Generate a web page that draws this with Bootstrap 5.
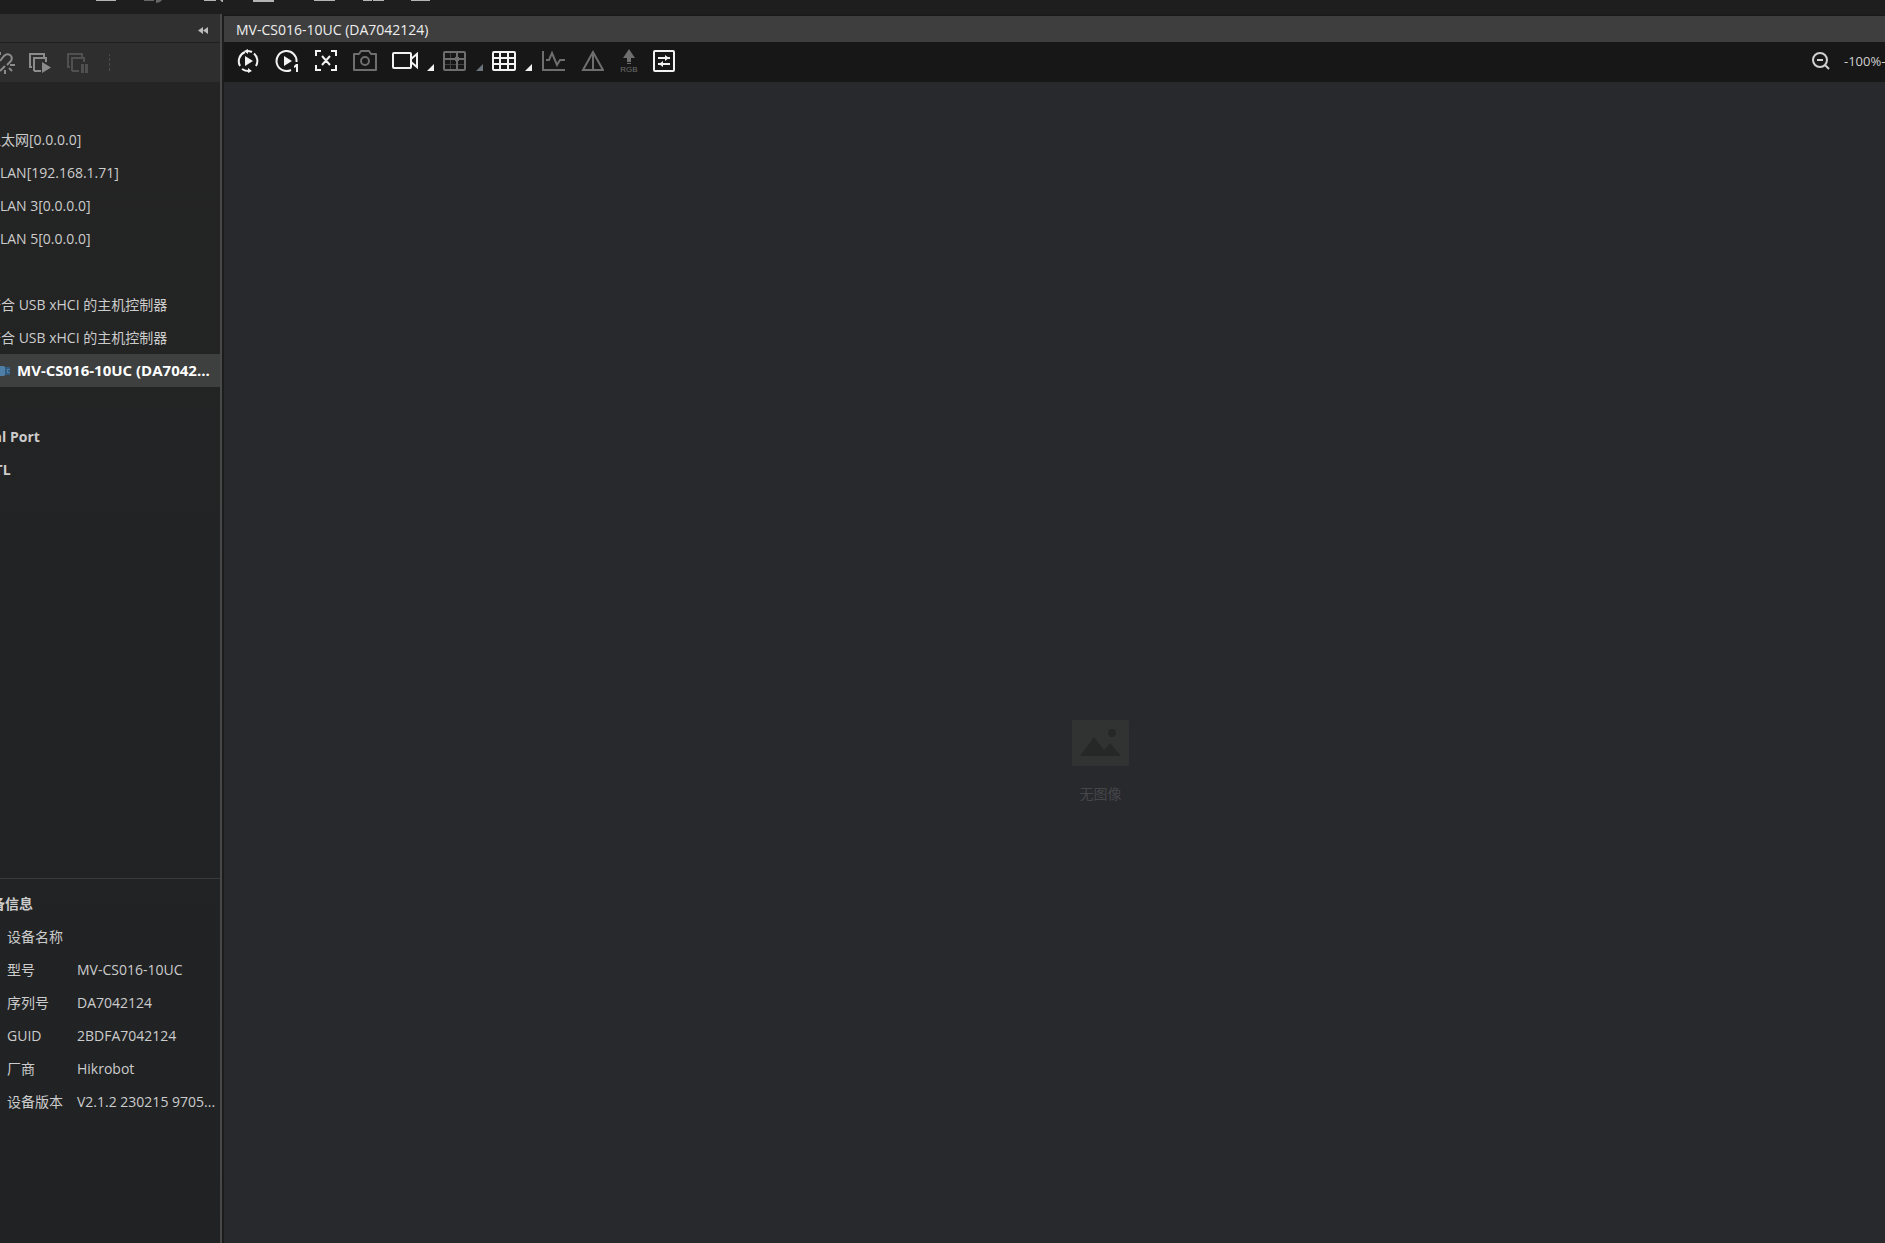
<!DOCTYPE html>
<html lang="zh-CN">
<head>
<meta charset="utf-8">
<meta name="viewport" content="width=device-width, initial-scale=1">
<title>MVS</title>
<link href="https://cdn.jsdelivr.net/npm/bootstrap@5.3.0/dist/css/bootstrap.min.css" rel="stylesheet">
<style>
body{background:#1e1e1e;color:#ccc;font-family:"Open Sans","Noto Sans CJK SC",sans-serif;font-size:14px;line-height:33px}
svg{display:block;fill:none;stroke:currentColor;stroke-width:2}
.solid{fill:currentColor;stroke:none}
.menu-strip{height:14px;color:#b4b4b4}
.menu-strip .off{color:#666}
.side{width:220px;background:linear-gradient(#242424,#202224)}
.side-head{height:28px;background:#303030;color:#bbb}
.side-tools{height:40px;background:#2e2e2e;border-top:1px solid #1f1f1f;color:#8b8b8b}
.side-start{margin-left:12px}
.side-stop{margin-left:14px}
.side-sep{margin-left:16px;color:#4c4c4c}
.splitter{width:4px;background:#1c1c1d;border-left:2px solid #484848}
.tool{border:0;background:none;padding:0;color:inherit;flex:none}
.tool:disabled{color:#6e6e6e}
.side-tools .tool:disabled{color:#505050}
.tree,.info-title{margin-left:-33px}
.tree li{height:33px;padding-left:20px;white-space:nowrap}
.tree .group{padding-left:0;font-weight:700}
.tree .picked{background:#3e403f;color:#fff;font-weight:700;font-size:15px;padding-left:33px}
.usb-body{fill:#4f7ea6;stroke:none}
.usb-plug{fill:#315b7f;stroke:none}
.info{border-top:1px solid #393a3b;padding-top:8px;height:365px}
.info-title{font-weight:700;padding-left:10px}
.info table{table-layout:fixed}
.info th{width:77px;font-weight:400;padding:0 0 0 7px}
.info td{padding:0;white-space:nowrap}
.doc-tab{height:27px;background:#3e3e3e;border-top:1px solid #191919;color:#eee;line-height:28px;margin-top:1px}
.view-tools{height:40px;background:#171717;color:#f2f2f2;padding:0 0 2px 12px}
.tools-wide{gap:15px}
.tools-tight{gap:9px}
.tools-end{gap:12px}
.drop{align-self:flex-end;margin-bottom:2px}
.rgb{font:8px "Liberation Sans",sans-serif;fill:#6e6e6e;stroke:none}
.zoom-box{gap:14px;width:74px;font-size:13px;color:#d0d0d0;white-space:nowrap}
.view{background:#28292d;color:#45464a;padding:205px 0 0 92px;gap:11px}
.pic-frame{fill:#313333;stroke:none}
.pic-shape{fill:#262827;stroke:none}
</style>
<script src="https://cdn.jsdelivr.net/npm/bootstrap@5.3.0/dist/js/bootstrap.bundle.min.js"></script>
</head>
<body class="vh-100 d-flex flex-column overflow-hidden">
<header class="menu-strip flex-shrink-0">
<svg width="440" height="4"><path class="solid" d="M96 0h20v1H96zM204 0h12v1h-12zM220 0h3v2h-1zM253 0h21v2h-21zM314 0h21v1h-21zM363 0h9v1h-9zM373 0h11v1h-11zM411 0h19v1h-19z"/><path class="solid off" d="M144 0h10v1h-10zM156 0h6l-2 2-4 1z"/></svg>
</header>
<div class="d-flex flex-grow-1 overflow-hidden">
<aside class="side d-flex flex-column flex-shrink-0 overflow-hidden">
<div class="side-head d-flex align-items-center justify-content-end pe-2 pt-1 flex-shrink-0">
<button class="tool me-1" aria-label="Collapse"><svg width="10" height="7"><path class="solid" d="M5 0v7L0 3.500zM10 0v7L5 3.500z"/></svg></button>
</div>
<div class="side-tools d-flex align-items-center flex-shrink-0">
<button class="tool" aria-label="Disconnect"><svg width="16" height="24"><path d="M0 10l4-5q3-3 6-1t1 6l-4 4M0 20l5-5M10 14h5M9 17l3 3M5 19v4M0 1v3"/></svg></button>
<button class="tool side-start" aria-label="Start all"><svg width="24" height="22"><path d="M4 15H2V2h14v3M7 18H6V6h12v4M6 19h7"/><path class="solid" d="M14 10l9 5.500-9 5.500z"/></svg></button>
<button class="tool side-stop" disabled aria-label="Stop all"><svg width="24" height="22"><path d="M4 15H2V2h14v3M7 18H6V6h12v4M6 19h7"/><path class="solid" d="M15 12h3v9h-3zM19 12h3v9h-3z"/></svg></button>
<svg class="side-sep" width="8" height="18"><path class="solid" d="M3 0h1v2H3zM3 4h1v3H3zM3 9h1v3H3zM3 14h1v3H3z"/></svg>
</div>
<ul class="tree list-unstyled mb-0 pt-2 flex-grow-1">
<li class="group"></li>
<li>以太网[0.0.0.0]</li><li>WLAN[192.168.1.71]</li><li>WLAN 3[0.0.0.0]</li><li>WLAN 5[0.0.0.0]</li>
<li class="group"></li>
<li>符合 USB xHCI 的主机控制器</li><li>符合 USB xHCI 的主机控制器</li>
<li class="picked d-flex align-items-center"><svg class="flex-shrink-0" width="17" height="12"><path class="usb-body" d="M0 1h4l1 1v8l-1 1H0z"/><path class="usb-plug" d="M5 2h5v8H5z"/><path class="usb-body" d="M7 4h3v1H8v2h2v1H7z"/></svg><span>MV-CS016-10UC (DA7042...</span></li>
<li class="group"></li><li class="group">Serial Port</li><li class="group">GenTL</li>
</ul>
<section class="info flex-shrink-0">
<div class="info-title">设备信息</div>
<table class="w-100">
<tr><th>设备名称</th><td></td></tr>
<tr><th>型号</th><td>MV-CS016-10UC</td></tr>
<tr><th>序列号</th><td>DA7042124</td></tr>
<tr><th>GUID</th><td>2BDFA7042124</td></tr>
<tr><th>厂商</th><td>Hikrobot</td></tr>
<tr><th>设备版本</th><td>V2.1.2 230215 9705...</td></tr>
</table>
</section>
</aside>
<div class="splitter flex-shrink-0"></div>
<main class="flex-grow-1 d-flex flex-column overflow-hidden">
<div class="doc-tab px-2 flex-shrink-0"><span class="ms-1">MV-CS016-10UC (DA7042124)</span></div>
<div class="view-tools d-flex align-items-center justify-content-between flex-shrink-0">
<div class="d-flex align-items-center tools-wide">
<button class="tool" aria-label="Start"><svg width="24" height="24"><path d="M9 3a10 10 0 0 0-5 14M18 4.500A10 10 0 0 1 20 17M6 20q3 2 7 2M10 2q4 0 6 1"/><path class="solid" d="M9 7v10l8-5zM12 0l-4 2 4 3zM12 24l4-2-4-3z"/></svg></button>
<button class="tool" aria-label="Start once"><svg width="24" height="24"><path d="M16 21A10 10 0 1 1 21.500 13"/><path class="solid" d="M9 7v10l8-5zM21 15h2v8h-2v-5l-2 1v-2z"/></svg></button>
<button class="tool" aria-label="Fit"><svg width="24" height="24"><path d="M2 7V2h5M17 2h5v5M22 16v5h-5M7 21H2v-5M8 7l8 9M16 7l-8 9"/></svg></button>
<button class="tool" disabled aria-label="Snapshot"><svg width="24" height="24"><path d="M1 5h5l2-3h8l2 3h5v16H1z" stroke-linejoin="round"/><circle cx="12" cy="12" r="4"/></svg></button>
<div class="d-flex align-items-center tools-tight">
<button class="tool" aria-label="Record"><svg width="26" height="24"><rect x="1" y="4" width="18" height="15" rx="1"/><path d="M19 10l6-5v13l-6-5"/></svg></button>
<svg class="drop" width="7" height="7"><path class="solid" d="M7 0v7H0z"/></svg>
<button class="tool" disabled aria-label="Cross line"><svg width="24" height="24"><rect x="1" y="3" width="21" height="18" rx="1"/><path d="M14 3v18M1 10h21"/><path class="solid" opacity=".5" d="M1 15h21v1H1zM7 3h1v18H7z"/><path class="solid" d="M12 8h4v4h-4z"/></svg></button>
<svg class="drop text-secondary" width="7" height="7"><path class="solid" d="M7 0v7H0z"/></svg>
<button class="tool" aria-label="Grid"><svg width="24" height="24"><rect x="1" y="3" width="22" height="18" rx="1"/><path d="M1 9h22M1 15h22M8 3v18M16 3v18"/></svg></button>
<svg class="drop" width="7" height="7"><path class="solid" d="M7 0v7H0z"/></svg>
<button class="tool" disabled aria-label="Waveform"><svg width="24" height="24"><path d="M2 2v19h22M5 11h3l3-7 5 12 3-5h5"/></svg></button>
</div>
<div class="d-flex align-items-center tools-end">
<button class="tool" disabled aria-label="Sharpness"><svg width="24" height="24"><path d="M13 3L3 21h20zM13 3v18"/></svg></button>
<button class="tool" disabled aria-label="RGB"><svg width="24" height="24"><path class="solid" d="M13 0l6 9h-4v4h-4V9H7zM11 14h4v1h-4z"/><text class="rgb" x="13" y="23" text-anchor="middle">RGB</text></svg></button>
<button class="tool" aria-label="Settings"><svg width="24" height="24"><rect x="2" y="2" width="20" height="20" rx="1"/><path d="M6 9h12M6 15h12"/><path class="solid" d="M13 6l4 3-4 3zM11 12v6l-4-3z"/></svg></button>
</div>
</div>
<div class="zoom-box d-flex align-items-center overflow-hidden">
<button class="tool" aria-label="Zoom out"><svg width="19" height="20"><circle cx="9" cy="9" r="7"/><path d="M6 9h6M14 14l4 4"/></svg></button>
<span>-100%-</span>
</div>
</div>
<div class="view flex-grow-1 d-flex flex-column align-items-center justify-content-center">
<svg width="57" height="46"><rect class="pic-frame" width="57" height="46" rx="2"/><path class="pic-shape" d="M8 36l14-19 10 13 6-7 11 13z"/><circle class="pic-shape" cx="40" cy="13" r="4"/></svg>
<div>无图像</div>
</div>
</main>
</div>
</body>
</html>
